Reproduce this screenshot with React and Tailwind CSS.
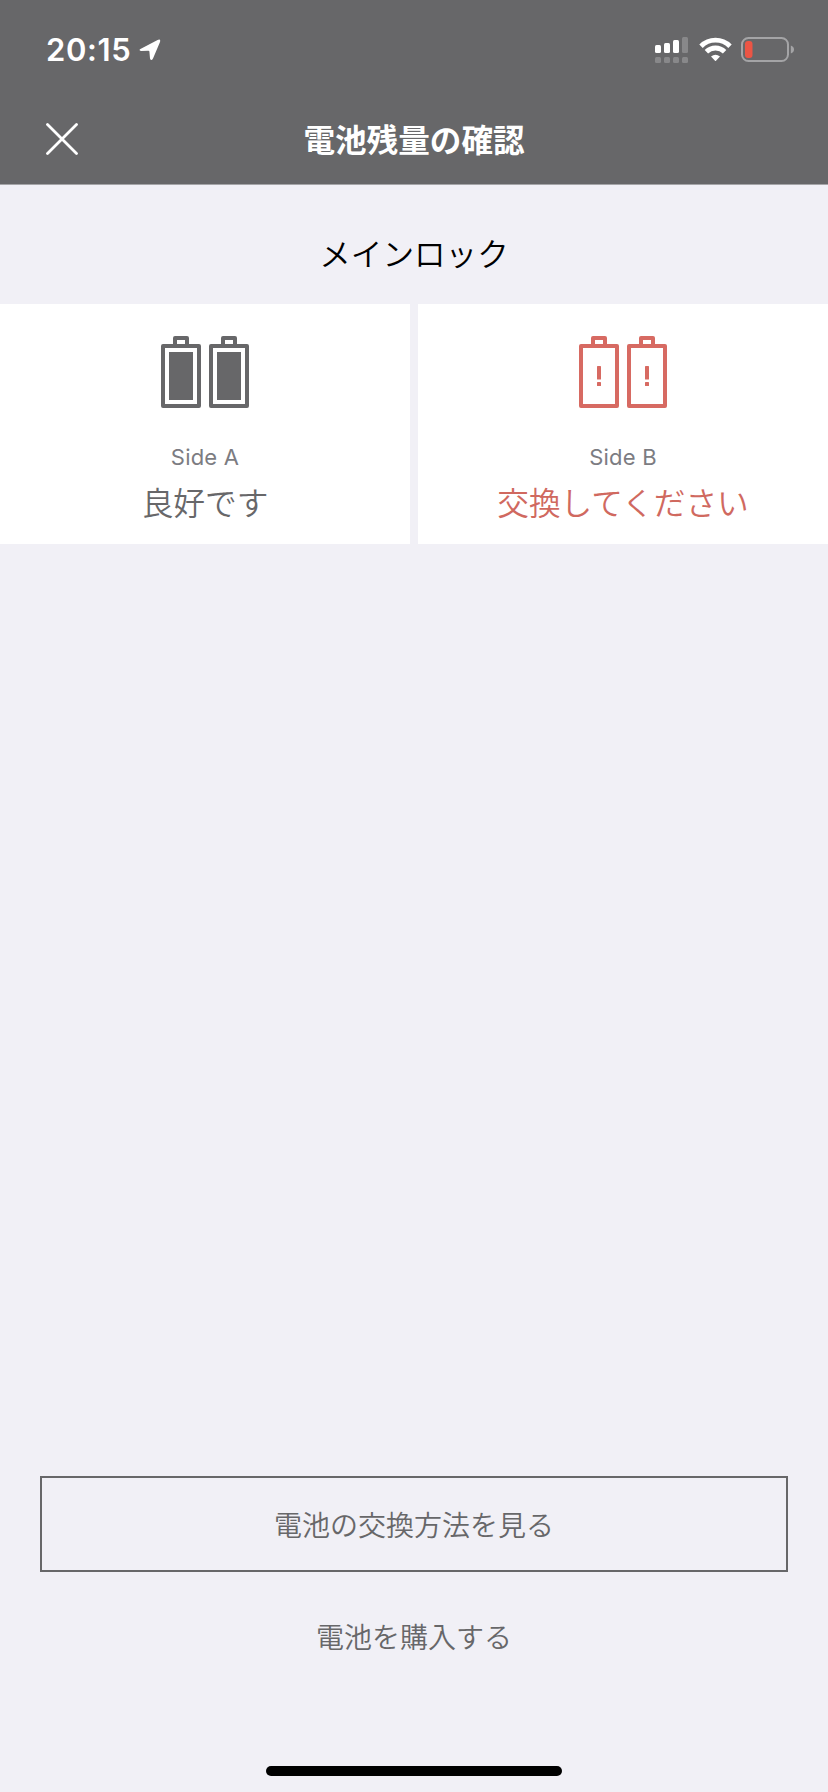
const StatusBar = () => {
  return (
    <div className="flex h-[94px] items-start justify-between pl-[46px] pr-[34px]">
      <div className="flex items-start">
        <span className="mt-[30px] w-[93px] font-['Inter'] text-[31px] leading-[40px] font-semibold tracking-[0.6px]">20:15</span>
        <svg className="mt-[39px]" width="22" height="22" viewBox="0 0 22 22">
          <path d="M1.4 10 18.6 .9Q22 -.3 21 3L14 19.6Q12.2 22.6 11 19.6L10.4 12.6Q10.3 11.7 9.4 11.7L2 11.9Q-.6 11.4 1.4 10Z" fill="#fff" />
        </svg>
      </div>

      <div className="flex items-start">
        <svg className="mt-[37px]" width="33" height="27" viewBox="0 0 33 27">
          <g fill="#fff">
            <rect x="0" y="8" width="6" height="8" rx="1.5" />
            <rect x="9" y="6" width="6" height="10" rx="1.5" />
            <rect x="18" y="3" width="6" height="13" rx="1.5" />
          </g>
          <g fill="#fff" opacity=".22">
            <rect x="27" y="0" width="6" height="16" rx="1.5" />
            <rect x="0" y="20" width="6" height="6" rx="1.5" />
            <rect x="9" y="20" width="6" height="6" rx="1.5" />
            <rect x="18" y="20" width="6" height="6" rx="1.5" />
            <rect x="27" y="20" width="6" height="6" rx="1.5" />
          </g>
        </svg>
        <svg className="mt-[37px] ml-[11px]" width="33" height="25" viewBox="0 0 33 25">
          <g fill="none" stroke="#fff" strokeWidth="4.8">
            <path d="M2 9.2A20.4 20.4 0 0 1 31 9.2" />
            <path d="M7.4 14.8A12.8 12.8 0 0 1 25.6 14.8" />
          </g>
          <path d="M12 19.6Q16.5 15.9 21 19.6L17 23.7Q16.5 24.1 16 23.7Z" fill="#fff" />
        </svg>
        <svg className="mt-[37px] ml-[9px]" width="53" height="25" viewBox="0 0 53 25">
          <rect x="1" y="1" width="46" height="23" rx="6.5" fill="none" stroke="#a4a4a6" strokeWidth="2" />
          <rect x="4" y="4" width="7.5" height="17" rx="3" fill="#eb5545" />
          <path d="M49.8 8.5Q53 9.7 53 12.5T49.8 16.5Z" fill="#a4a4a6" />
        </svg>
      </div>
    </div>
  );
};

const Battery = ({ low }) => {
  return (
    <svg width="40" height="72" viewBox="0 0 40 72" fill="none" stroke="currentColor" strokeWidth="4" strokeLinejoin="round">
      <path d="M14 10V2H26V10" />
      <rect x="2" y="10" width="36" height="60" />
      {low ? (
        <g fill="currentColor" stroke="none">
          <rect x="18" y="30" width="4" height="13.5" rx=".6" />
          <rect x="18" y="46" width="4" height="4" rx=".6" />
        </g>
      ) : (
        <rect x="8" y="16" width="24" height="48" fill="currentColor" stroke="none" />
      )}
    </svg>
  );
};

const SideCard = ({ name, message, low }) => {
  return (
    <section className="flex h-[240px] flex-1 flex-col items-center bg-white pt-8">
      <div className={low ? "flex gap-2 text-[#d76a62]" : "flex gap-2 text-[#676769]"}>
        <Battery low={low} />
        <Battery low={low} />
      </div>
      <p className="mt-[33px] font-['Inter'] text-[22px] leading-8 font-normal tracking-[0.2px] text-[#7c7c82]">{name}</p>
      <p className={low ? "mt-2 text-[31.7px] leading-[40px] text-[#d0695f]" : "mt-2 text-[31.7px] leading-[40px] text-[#676769]"}>
        {message}
      </p>
    </section>
  );
};

export default function App() {
  return (
    <main className="flex h-[1792px] w-[828px] flex-col bg-[#f1f0f6] font-['Noto_Sans_CJK_JP',sans-serif] font-[350]">
      <header className="h-[185px] border-b border-[#a5a5a8] bg-[#676769] text-white">
        <StatusBar />
        <div className="grid h-[90px] grid-cols-[1fr_auto_1fr] items-center">
          <button className="ml-[46px] w-8" aria-label="close">
            <svg width="32" height="32" viewBox="0 0 32 32" stroke="#fff" strokeWidth="2.8" strokeLinecap="round">
              <path d="M1.5 1.5 30.5 30.5M30.5 1.5 1.5 30.5" />
            </svg>
          </button>
          <h1 className="pb-[2px] text-[31.6px] leading-[44px] font-bold">電池残量の確認</h1>
        </div>
      </header>

      <h2 className="flex h-[119px] items-center justify-center pt-[17px] text-[31.6px] text-black">メインロック</h2>

      <div className="flex gap-2">
        <SideCard name="Side A" message="良好です" />
        <SideCard name="Side B" message="交換してください" low />
      </div>

      <div className="mt-auto flex flex-col items-center px-10 text-[28px] text-[#676769]">
        <button className="h-24 w-full border-2 border-[#676769]">電池の交換方法を見る</button>
        <button className="mt-[42px] h-11 leading-[44px]">電池を購入する</button>
        <div className="mt-[108px] mb-4 h-[10px] w-[296px] rounded-full bg-black" />
      </div>
    </main>
  );
}
